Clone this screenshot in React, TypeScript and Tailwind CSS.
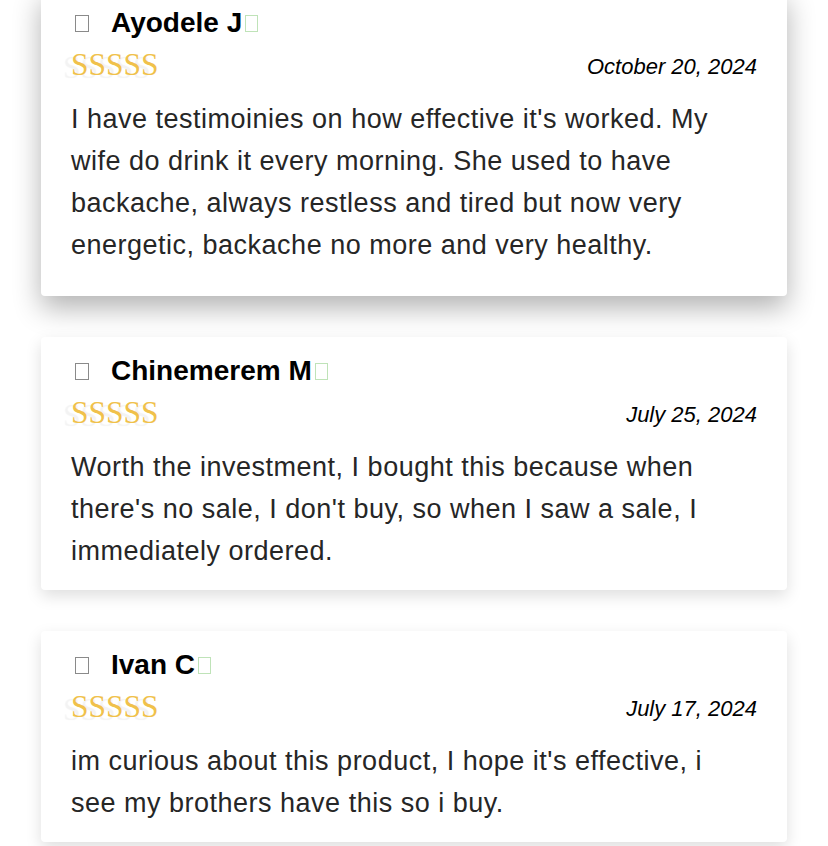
import React from 'react';

interface Review {
  name: string;
  date: string;
  body: string;
  featured?: boolean;
}

const reviews: Review[] = [
  {
    name: 'Ayodele J',
    date: 'October 20, 2024',
    body: "I have testimoinies on how effective it's worked. My wife do drink it every morning. She used to have backache, always restless and tired but now very energetic, backache no more and very healthy.",
    featured: true,
  },
  {
    name: 'Chinemerem M',
    date: 'July 25, 2024',
    body: "Worth the investment, I bought this because when there's no sale, I don't buy, so when I saw a sale, I immediately ordered.",
  },
  {
    name: 'Ivan C',
    date: 'July 17, 2024',
    body: "im curious about this product, I hope it's effective, i see my brothers have this so i buy.",
  },
];

// stars fall back to plain "S" glyphs in the shot
const Stars: React.FC = () => (
  <span
    className="inline-block text-[31.5px] leading-[30px] text-[#f0c14b] [text-shadow:-8px_3px_1px_rgba(0,0,0,0.05)]"
    style={{ fontFamily: '"Liberation Serif", serif' }}
  >
    SSSSS
  </span>
);

const ReviewCard: React.FC<{ review: Review }> = ({ review }) => {
  return (
    <div
      className={
        review.featured
          ? 'bg-white rounded-[4px] pl-[30px] pr-[30px] pt-[20px] pb-[30px] shadow-[0_12px_28px_rgba(0,0,0,0.3)]'
          : 'bg-white rounded-[4px] pl-[30px] pr-[30px] pt-[20px] pb-[18px] shadow-[0_6px_16px_rgba(0,0,0,0.13)]'
      }
    >
      <div className="flex items-center h-[28px]">
        <span className="inline-block w-[14px] h-[17px] border border-[#8a8a8a] ml-[4px] mr-[22px]" />
        <span className="text-[28px] leading-[28px] font-bold text-black">{review.name}</span>
        <span className="inline-block w-[13px] h-[17px] border border-[#bfe3b8] ml-[3px]" />
      </div>
      <div className="flex items-center justify-between h-[30px] mt-[13px]">
        <Stars />
        <span className="text-[22px] italic text-black mt-[2px]">{review.date}</span>
      </div>
      <p className="mt-[18px] pr-[26px] text-[27px] leading-[42px] tracking-[0.5px] text-[#262626]">
        {review.body}
      </p>
    </div>
  );
};

export default function App() {
  return (
    <div
      className="w-[828px] h-[846px] overflow-hidden bg-white"
      style={{ fontFamily: '"Liberation Sans", Arial, sans-serif' }}
    >
      <div className="flex flex-col gap-[41px] mt-[-11px] ml-[41px] mr-[41px]">
        {reviews.map((r) => (
          <ReviewCard key={r.name} review={r} />
        ))}
      </div>
    </div>
  );
}
